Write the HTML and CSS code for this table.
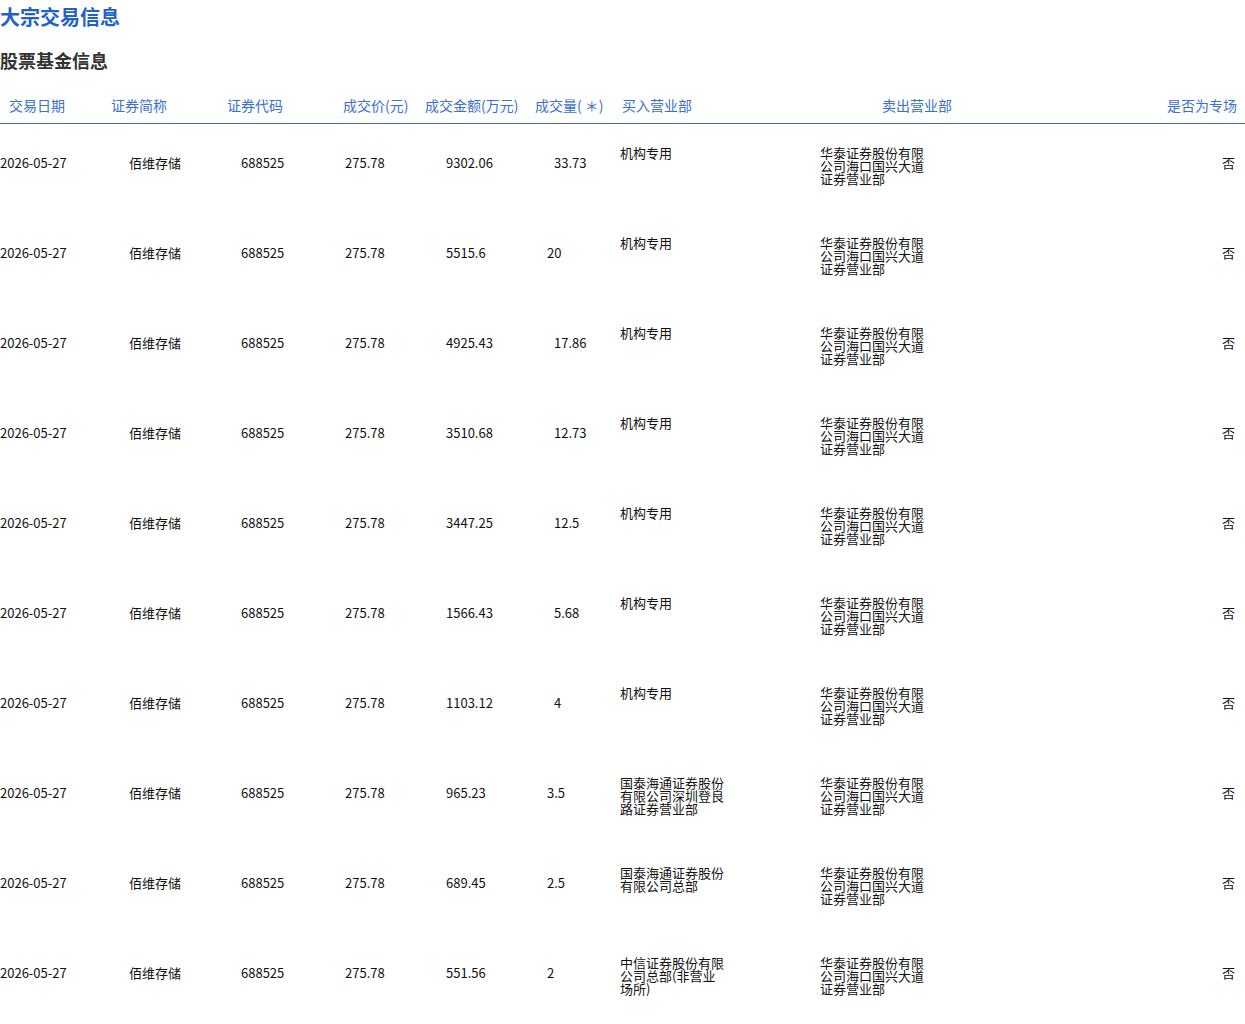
FILE: index.html
```html
<!DOCTYPE html>
<html lang="zh-CN">
<head>
<meta charset="utf-8">
<title>大宗交易信息</title>
<link rel="stylesheet" href="styles.css">
</head>
<body>
<h1 class="title">大宗交易信息</h1>
<h2 class="subtitle">股票基金信息</h2>
<table class="trades">
  <colgroup>
    <col class="c1"><col class="c2"><col class="c3"><col class="c4"><col class="c5"><col class="c6"><col class="c7"><col class="c8"><col class="c9">
  </colgroup>
  <thead>
    <tr>
      <th class="h1">交易日期</th>
      <th class="h2">证券简称</th>
      <th class="h3">证券代码</th>
      <th class="h4">成交价(元)</th>
      <th class="h5">成交金额(万元)</th>
      <th class="h6">成交量( ＊)</th>
      <th class="h7">买入营业部</th>
      <th class="h8">卖出营业部</th>
      <th class="h9">是否为专场</th>
    </tr>
  </thead>
  <tbody>
    <tr>
      <td class="d1">2026-05-27</td><td class="d2">佰维存储</td><td class="d3">688525</td><td class="d4">275.78</td><td class="d5">9302.06</td><td class="d6">33.73</td>
      <td class="d7"><div class="dept">机构专用</div></td><td class="d8"><div class="dept">华泰证券股份有限公司海口国兴大道证券营业部</div></td><td class="d9">否</td>
    </tr>
    <tr>
      <td class="d1">2026-05-27</td><td class="d2">佰维存储</td><td class="d3">688525</td><td class="d4">275.78</td><td class="d5">5515.6</td><td class="d6 alt">20</td>
      <td class="d7"><div class="dept">机构专用</div></td><td class="d8"><div class="dept">华泰证券股份有限公司海口国兴大道证券营业部</div></td><td class="d9">否</td>
    </tr>
    <tr>
      <td class="d1">2026-05-27</td><td class="d2">佰维存储</td><td class="d3">688525</td><td class="d4">275.78</td><td class="d5">4925.43</td><td class="d6">17.86</td>
      <td class="d7"><div class="dept">机构专用</div></td><td class="d8"><div class="dept">华泰证券股份有限公司海口国兴大道证券营业部</div></td><td class="d9">否</td>
    </tr>
    <tr>
      <td class="d1">2026-05-27</td><td class="d2">佰维存储</td><td class="d3">688525</td><td class="d4">275.78</td><td class="d5">3510.68</td><td class="d6">12.73</td>
      <td class="d7"><div class="dept">机构专用</div></td><td class="d8"><div class="dept">华泰证券股份有限公司海口国兴大道证券营业部</div></td><td class="d9">否</td>
    </tr>
    <tr>
      <td class="d1">2026-05-27</td><td class="d2">佰维存储</td><td class="d3">688525</td><td class="d4">275.78</td><td class="d5">3447.25</td><td class="d6">12.5</td>
      <td class="d7"><div class="dept">机构专用</div></td><td class="d8"><div class="dept">华泰证券股份有限公司海口国兴大道证券营业部</div></td><td class="d9">否</td>
    </tr>
    <tr>
      <td class="d1">2026-05-27</td><td class="d2">佰维存储</td><td class="d3">688525</td><td class="d4">275.78</td><td class="d5">1566.43</td><td class="d6">5.68</td>
      <td class="d7"><div class="dept">机构专用</div></td><td class="d8"><div class="dept">华泰证券股份有限公司海口国兴大道证券营业部</div></td><td class="d9">否</td>
    </tr>
    <tr>
      <td class="d1">2026-05-27</td><td class="d2">佰维存储</td><td class="d3">688525</td><td class="d4">275.78</td><td class="d5">1103.12</td><td class="d6">4</td>
      <td class="d7"><div class="dept">机构专用</div></td><td class="d8"><div class="dept">华泰证券股份有限公司海口国兴大道证券营业部</div></td><td class="d9">否</td>
    </tr>
    <tr>
      <td class="d1">2026-05-27</td><td class="d2">佰维存储</td><td class="d3">688525</td><td class="d4">275.78</td><td class="d5">965.23</td><td class="d6 alt">3.5</td>
      <td class="d7"><div class="dept">国泰海通证券股份有限公司深圳登良路证券营业部</div></td><td class="d8"><div class="dept">华泰证券股份有限公司海口国兴大道证券营业部</div></td><td class="d9">否</td>
    </tr>
    <tr>
      <td class="d1">2026-05-27</td><td class="d2">佰维存储</td><td class="d3">688525</td><td class="d4">275.78</td><td class="d5">689.45</td><td class="d6 alt">2.5</td>
      <td class="d7"><div class="dept">国泰海通证券股份有限公司总部</div></td><td class="d8"><div class="dept">华泰证券股份有限公司海口国兴大道证券营业部</div></td><td class="d9">否</td>
    </tr>
    <tr>
      <td class="d1">2026-05-27</td><td class="d2">佰维存储</td><td class="d3">688525</td><td class="d4">275.78</td><td class="d5">551.56</td><td class="d6 alt">2</td>
      <td class="d7"><div class="dept">中信证券股份有限公司总部(非营业场所)</div></td><td class="d8"><div class="dept">华泰证券股份有限公司海口国兴大道证券营业部</div></td><td class="d9">否</td>
    </tr>
  </tbody>
</table>
</body>
</html>
```

FILE: styles.css
```css
html, body {
  margin: 0;
  padding: 0;
  background: #ffffff;
}
body {
  font-family: "Noto Sans CJK SC", "Noto Sans", sans-serif;
  color: #111111;
  width: 1245px;
  overflow: hidden;
}
.title {
  margin: 0;
  font-size: 20px;
  line-height: 34px;
  font-weight: 700;
  color: #2261c6;
}
.subtitle {
  margin: 9px 0 0 0;
  font-size: 18px;
  line-height: 34px;
  font-weight: 700;
  color: #333333;
}
.trades {
  width: 1245px;
  border-collapse: separate;
  border-spacing: 0;
  table-layout: fixed;
}
.c1 { width: 100px; }
.c2 { width: 115px; }
.c3 { width: 115px; }
.c4 { width: 85px; }
.c5 { width: 110px; }
.c6 { width: 87px; }
.c7 { width: 198px; }
.c8 { width: 220px; }
.c9 { width: 215px; }

.trades th {
  height: 47px;
  padding: 0 0 8px 0;
  box-sizing: border-box;
  vertical-align: bottom;
  text-align: left;
  font-size: 14px;
  line-height: 20px;
  font-weight: 400;
  color: #3b6fd0;
  white-space: nowrap;
  border-bottom: 1px solid #3d67ad;
}
.h1 { padding-left: 9px !important; }
.h2 { padding-left: 11px !important; }
.h3 { padding-left: 12px !important; }
.h4 { padding-left: 13px !important; }
.h5 { padding-left: 10px !important; }
.h6 { padding-left: 10px !important; }
.h7 { padding-left: 10px !important; }
.h8 { padding-left: 72px !important; }
.h9 { text-align: right !important; padding-right: 8px !important; }

.trades td {
  height: 90px;
  box-sizing: border-box;
  padding: 22px 0 0 0;
  vertical-align: top;
  font-size: 13px;
  line-height: 34px;
  white-space: nowrap;
}
.d1 { padding-left: 0; }
.d2 { padding-left: 29px !important; }
.d3 { padding-left: 26px !important; }
.d4 { padding-left: 15px !important; }
.d5 { padding-left: 31px !important; }
.d6 { padding-left: 29px !important; }
.d6.alt { padding-left: 22px !important; }
.d7 { padding-left: 8px !important; }
.d8 { padding-left: 10px !important; }
.d9 { text-align: right; padding-right: 10px !important; }

.dept {
  width: 105px;
  white-space: normal;
  line-height: 13px;
  font-size: 13px;
  word-break: break-all;
}
```
